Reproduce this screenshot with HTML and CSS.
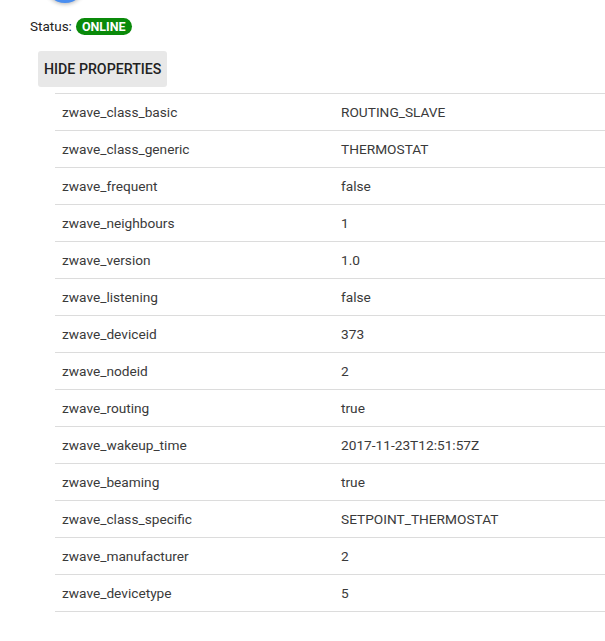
FILE: index.html
```html
<!DOCTYPE html>
<html>
<head>
<meta charset="utf-8">
<link rel="stylesheet" href="styles.css">
</head>
<body>
<div class="page">
  <div class="avatar"></div>
  <div class="status">Status: <span class="badge">ONLINE</span></div>
  <div class="btn-wrap"><button class="btn">HIDE PROPERTIES</button></div>
  <table class="props">
    <tr><td class="k">zwave_class_basic</td><td>ROUTING_SLAVE</td></tr>
    <tr><td class="k">zwave_class_generic</td><td>THERMOSTAT</td></tr>
    <tr><td class="k">zwave_frequent</td><td>false</td></tr>
    <tr><td class="k">zwave_neighbours</td><td>1</td></tr>
    <tr><td class="k">zwave_version</td><td>1.0</td></tr>
    <tr><td class="k">zwave_listening</td><td>false</td></tr>
    <tr><td class="k">zwave_deviceid</td><td>373</td></tr>
    <tr><td class="k">zwave_nodeid</td><td>2</td></tr>
    <tr><td class="k">zwave_routing</td><td>true</td></tr>
    <tr><td class="k">zwave_wakeup_time</td><td>2017-11-23T12:51:57Z</td></tr>
    <tr><td class="k">zwave_beaming</td><td>true</td></tr>
    <tr><td class="k">zwave_class_specific</td><td>SETPOINT_THERMOSTAT</td></tr>
    <tr><td class="k">zwave_manufacturer</td><td>2</td></tr>
    <tr><td class="k">zwave_devicetype</td><td>5</td></tr>
  </table>
</div>
</body>
</html>
```
FILE: styles.css
```css
html, body { margin: 0; padding: 0; background: #fff; overflow: hidden; }
body { font-family: Roboto, "Liberation Sans", sans-serif; color: #333; font-size: 13px; }
.page { position: relative; padding: 16px 0 0 30px; }
.avatar {
  position: absolute; left: 46px; top: -33px; width: 38px; height: 36px;
  border-radius: 50%; background: #4a8ef0;
  box-shadow: 0 1px 4px rgba(0,0,0,0.3);
}
.status { display: flex; align-items: center; gap: 4px; height: 20px; font-size: 13.5px; color: #222; }
.badge {
  display: inline-block; background: #0a8a0a; color: #fff; font-weight: bold;
  font-size: 12.5px; line-height: 17px; padding: 0 6px; border-radius: 9px;
}
.btn-wrap { padding: 15px 0 0 8px; }
.btn {
  font-family: Roboto, "Liberation Sans", sans-serif; font-weight: 500; font-size: 14.2px;
  color: #222; background: #e8e8e8; border: none; border-radius: 3px;
  height: 36px; padding: 0 6px; display: block;
}
.props {
  margin: 6px 0 0 25px; border-collapse: collapse; width: 560px;
  border-top: 1px solid #dcdcdc;
}
.props td { height: 36px; padding: 0 0 0 7px; border-bottom: 1px solid #dcdcdc; vertical-align: middle; color: #3a3a3a; font-size: 13.7px; }
.props td.k { width: 272px; }
```
